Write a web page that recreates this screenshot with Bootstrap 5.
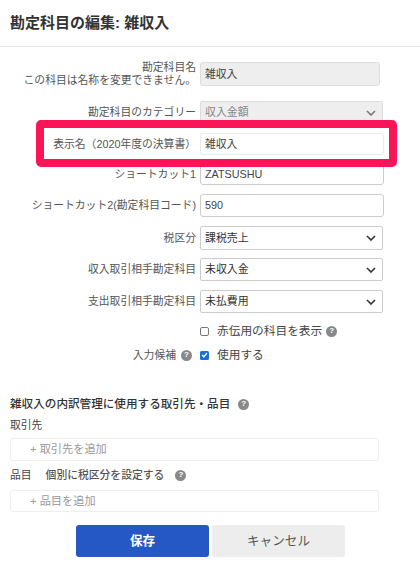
<!DOCTYPE html>
<html lang="ja">
<head>
<meta charset="utf-8">
<title>勘定科目の編集</title>
<link href="https://cdn.jsdelivr.net/npm/bootstrap@5.3.0/dist/css/bootstrap.min.css" rel="stylesheet">
<style>
html, body { height: 100%; }
body { width: 420px; height: 583px; overflow: hidden; background: #fff; color: #444; font-family: "Liberation Sans", "Noto Sans CJK JP", sans-serif; font-size: 10.8px; position: relative; }
.dlg-head { height: 47px; padding: 15px 10px 0; border-bottom: 1px solid #e5e5e5; }
.dlg-title { font-size: 15px; font-weight: 700; line-height: 16px; color: #333; margin: 0; }
.form-area { padding-top: 15px; }
.frow { display: flex; align-items: center; height: 23px; margin-bottom: 9px; }
.flabel { width: 196px; flex: none; text-align: right; line-height: 13px; color: #555; }
.ffield { margin-left: 4px; height: 100%; }
.tinput { display: block; width: 184px; height: 100%; padding: 0 4px; border: 1px solid #ccc; border-radius: 3px; font-size: 10.8px; color: #444; background: #fff; display: flex; align-items: center; }
.tinput.narrow { width: 180px; background: #eee; border-color: #ddd; }
.tinput.pale { border-color: #eaeaea; }
.tselect { width: 183px; height: 100%; padding: 0 4px; border: 1px solid #ccc; border-radius: 2px; font-size: 10.9px; display: flex; align-items: center; justify-content: space-between; background: #fff; color: #333; }
.tselect.off { background: #eee; color: #888; border-color: #ddd; }
.tselect svg { margin-right: 2px; }
.r1 { height: 24px; margin-bottom: 15px; }
.r3 { height: 22px; margin-bottom: 8px; }
.r4 { height: 22px; }
.r6 { height: 24px; margin-bottom: 8px; }
.r-last { margin-bottom: 10px; }
.chkrow { display: flex; align-items: center; height: 16px; margin-bottom: 8px; }
.chkbox { width: 9px; height: 9px; border: 1px solid #777; border-radius: 2px; margin: 0 8px 0 4px; flex: none; background: #fff; }
.chkbox.on { border: none; background: #1a6fd8; display: flex; align-items: center; justify-content: center; border-radius: 1.5px; }
.chktext { font-size: 11.7px; color: #444; line-height: 16px; }
.qmark { display: inline-flex; width: 11px; height: 11px; border-radius: 50%; background: #888; color: #fff; font-size: 8px; font-weight: 700; align-items: center; justify-content: center; line-height: 1; flex: none; font-family: "Liberation Sans", sans-serif; }
.qlabel { display: flex; align-items: center; justify-content: flex-end; padding-right: 4px; gap: 5px; }
.qlabel + .chkbox { margin-left: 4px; }
.sect { padding: 0 10px; margin-top: 33px; }
.sect-title { font-size: 11.6px; font-weight: 500; color: #333; line-height: 16px; display: flex; align-items: center; margin-bottom: 5px; }
.sect-title .qmark { margin-left: 8px; }
.sublabel { font-size: 10.8px; color: #444; line-height: 16px; display: flex; align-items: center; margin-bottom: 5px; height: 16px; }
.sublabel.tight { margin-bottom: 7px; }
.tagbox { width: 369px; height: 23px; border: 1px solid #eee; border-radius: 3px; padding-left: 19px; color: #999; font-size: 11.2px; display: flex; align-items: center; margin-bottom: 6px; background: #fff; }
.tagbox.last { height: 22px; margin-bottom: 0; }
.taxlink { margin-left: 14px; color: #555; font-size: 10.8px; font-weight: 500; }
.sublabel .qmark { margin-left: 11px; }
.actions { display: flex; gap: 3px; margin-left: 76px; margin-top: 13px; }
.act { width: 133px; height: 32px; border-radius: 3px; border: 0; font-size: 12.6px; padding: 0; }
.act-save { background: #2558c4; color: #fff; font-weight: 700; }
.act-cancel { background: #eeeded; color: #555; }
.hilite { position: absolute; left: 36px; top: 120px; width: 361px; height: 47px; border: 8px solid #fc1459; border-radius: 5px; pointer-events: none; }
</style>
</head>
<body>
<div class="dlg-head"><h5 class="dlg-title">勘定科目の編集: 雑収入</h5></div>
<form class="form-area">
  <div class="frow r1">
    <div class="flabel">勘定科目名<br>この科目は名称を変更できません。</div>
    <div class="ffield"><div class="tinput narrow">雑収入</div></div>
  </div>
  <div class="frow">
    <div class="flabel">勘定科目のカテゴリー</div>
    <div class="ffield"><div class="tselect off">収入金額<svg width="10" height="6" viewBox="0 0 10 6"><path d="M1 1l4 4 4-4" fill="none" stroke="#777" stroke-width="1.6"/></svg></div></div>
  </div>
  <div class="frow r3">
    <div class="flabel">表示名（2020年度の決算書）</div>
    <div class="ffield"><div class="tinput pale">雑収入</div></div>
  </div>
  <div class="frow r4">
    <div class="flabel">ショートカット1</div>
    <div class="ffield"><div class="tinput">ZATSUSHU</div></div>
  </div>
  <div class="frow">
    <div class="flabel">ショートカット2(勘定科目コード)</div>
    <div class="ffield"><div class="tinput">590</div></div>
  </div>
  <div class="frow r6">
    <div class="flabel">税区分</div>
    <div class="ffield"><div class="tselect">課税売上<svg width="10" height="6" viewBox="0 0 10 6"><path d="M1 1l4 4 4-4" fill="none" stroke="#333" stroke-width="1.6"/></svg></div></div>
  </div>
  <div class="frow">
    <div class="flabel">収入取引相手勘定科目</div>
    <div class="ffield"><div class="tselect">未収入金<svg width="10" height="6" viewBox="0 0 10 6"><path d="M1 1l4 4 4-4" fill="none" stroke="#333" stroke-width="1.6"/></svg></div></div>
  </div>
  <div class="frow r-last">
    <div class="flabel">支出取引相手勘定科目</div>
    <div class="ffield"><div class="tselect">未払費用<svg width="10" height="6" viewBox="0 0 10 6"><path d="M1 1l4 4 4-4" fill="none" stroke="#333" stroke-width="1.6"/></svg></div></div>
  </div>
  <div class="chkrow">
    <div class="flabel"></div>
    <span class="chkbox"></span><span class="chktext">赤伝用の科目を表示</span><span class="qmark ms-1">?</span>
  </div>
  <div class="chkrow">
    <div class="flabel qlabel">入力候補<span class="qmark">?</span></div>
    <span class="chkbox on"><svg width="7" height="6" viewBox="0 0 7 6"><path d="M1 3l1.8 1.8L6 1" fill="none" stroke="#fff" stroke-width="1.3"/></svg></span><span class="chktext">使用する</span>
  </div>
</form>
<section class="sect">
  <div class="sect-title">雑収入の内訳管理に使用する取引先・品目<span class="qmark">?</span></div>
  <div class="sublabel">取引先</div>
  <div class="tagbox">+ 取引先を追加</div>
  <div class="sublabel tight">品目<span class="taxlink">個別に税区分を設定する</span><span class="qmark">?</span></div>
  <div class="tagbox last">+ 品目を追加</div>
</section>
<div class="actions">
  <button type="button" class="btn act act-save">保存</button>
  <button type="button" class="btn act act-cancel">キャンセル</button>
</div>
<div class="hilite"></div>
<script src="https://cdn.jsdelivr.net/npm/bootstrap@5.3.0/dist/js/bootstrap.bundle.min.js"></script>
</body>
</html>
